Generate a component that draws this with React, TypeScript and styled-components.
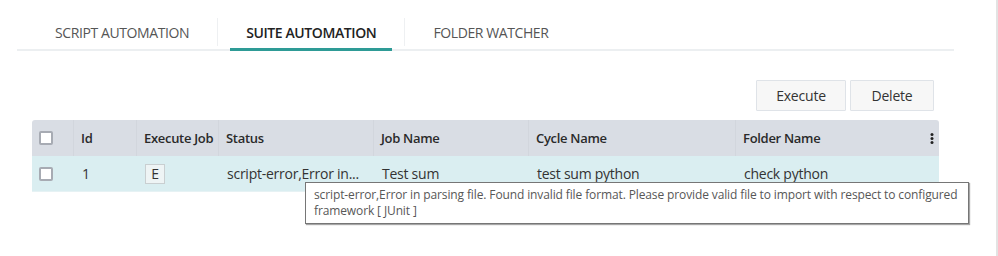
import React from "react";
import styled, { createGlobalStyle } from "styled-components";

const GlobalStyle = createGlobalStyle`
  html, body { margin: 0; padding: 0; background: #ffffff; }
  body { font-family: "Open Sans", "Noto Sans", sans-serif; color: #333; }
  * { box-sizing: border-box; }
`;

const Page = styled.div`
  width: 998px;
  height: 256px;
  border-right: 2px solid #e3e3e3;
  padding: 18px 0 0 17px;
  position: relative;
  overflow: hidden;
`;

const TabBar = styled.div`
  display: flex;
  align-items: stretch;
  width: 937px;
  height: 33px;
  border-bottom: 2px solid #eceff1;
  padding-left: 10px;
`;

const Tab = styled.div<{ $active?: boolean }>`
  display: flex;
  align-items: center;
  margin: 0 12px -2px;
  padding: 0 16px 2px;
  font-size: 14px;
  letter-spacing: -0.4px;
  color: ${(p) => (p.$active ? "#222" : "#555")};
  font-weight: ${(p) => (p.$active ? 600 : 400)};
  border-bottom: 3px solid ${(p) => (p.$active ? "#2e9b96" : "transparent")};
  white-space: nowrap;
`;

const TabDivider = styled.div`
  width: 1px;
  height: 28px;
  background: #eef0f2;
`;

const Toolbar = styled.div`
  display: flex;
  justify-content: flex-end;
  gap: 4px;
  width: 917px;
  margin-top: 29px;
`;

const Button = styled.button<{ $wide?: boolean }>`
  width: ${(p) => (p.$wide ? "90px" : "84px")};
  height: 31px;
  background: #f7f7f7;
  border: 1px solid #dfe3e8;
  border-radius: 1px;
  font-family: "Open Sans", sans-serif;
  font-size: 14px;
  letter-spacing: -0.2px;
  color: #333;
  padding: 0;
`;

const Table = styled.div`
  margin: 9px 0 0 15px;
  width: 907px;
`;

const HeaderRow = styled.div`
  display: grid;
  grid-template-columns: 42px 63px 82px 155px 155px 207px 203px;
  height: 36px;
  background: #d9dde4;
  border-radius: 3px 3px 0 0;
`;

const BodyRow = styled.div`
  display: grid;
  grid-template-columns: 42px 63px 82px 155px 155px 207px 203px;
  height: 36px;
  background: #daeef1;
  border-bottom: 1px solid #e6f2f4;
`;

const HeadCell = styled.div<{ $last?: boolean }>`
  display: flex;
  align-items: center;
  justify-content: space-between;
  padding: 0 ${(p) => (p.$last ? "5px" : "6px")} 0 7px;
  font-size: 13px;
  letter-spacing: -0.3px;
  font-weight: 600;
  color: #2a2a2a;
  border-right: ${(p) => (p.$last ? "none" : "1px solid #d2d6dd")};
  white-space: nowrap;
`;

const Cell = styled.div<{ $narrow?: boolean }>`
  display: flex;
  align-items: center;
  padding: 0 7px 0 ${(p) => (p.$narrow ? "7px" : "8px")};
  font-size: 14px;
  letter-spacing: -0.25px;
  color: #333;
  white-space: nowrap;
  overflow: hidden;
`;

const Checkbox = styled.span`
  display: inline-block;
  width: 14px;
  height: 14px;
  background: #fff;
  border: 2px solid #a7abb3;
  border-radius: 2px;
`;

const ExecBox = styled.span`
  display: inline-flex;
  align-items: center;
  justify-content: center;
  width: 20px;
  height: 20px;
  background: #eef4f5;
  border: 1px solid #c9cfd1;
  font-size: 14px;
  color: #333;
`;

const Kebab = styled.svg`
  width: 4px;
  height: 11px;
`;

const Tooltip = styled.div`
  position: absolute;
  left: 305px;
  top: 182px;
  width: 664px;
  height: 42px;
  background: #fff;
  border: 1px solid #767676;
  box-shadow: 1px 1px 1px rgba(0, 0, 0, 0.35);
  padding: 4px 8px;
  font-family: "Open Sans", sans-serif;
  font-size: 12px;
  line-height: 16px;
  letter-spacing: -0.12px;
  color: #575757;
`;

const columns = ["Id", "Execute Job", "Status", "Job Name", "Cycle Name", "Folder Name"];

export default function App() {
  return (
    <>
      <GlobalStyle />
      <Page>
        <TabBar>
          <Tab>SCRIPT AUTOMATION</Tab>
          <TabDivider />
          <Tab $active>SUITE AUTOMATION</Tab>
          <TabDivider />
          <Tab>FOLDER WATCHER</Tab>
        </TabBar>
        <Toolbar>
          <Button $wide>Execute</Button>
          <Button>Delete</Button>
        </Toolbar>
        <Table>
          <HeaderRow>
            <HeadCell>
              <Checkbox />
            </HeadCell>
            {columns.map((c, i) => (
              <HeadCell key={c} $last={i === columns.length - 1}>
                {c}
                {i === columns.length - 1 && (
                  <Kebab viewBox="0 0 4 11">
                    <circle cx="2" cy="1.5" r="1.5" fill="#222" />
                    <circle cx="2" cy="5.5" r="1.5" fill="#222" />
                    <circle cx="2" cy="9.5" r="1.5" fill="#222" />
                  </Kebab>
                )}
              </HeadCell>
            ))}
          </HeaderRow>
          <BodyRow>
            <Cell $narrow>
              <Checkbox />
            </Cell>
            <Cell>1</Cell>
            <Cell>
              <ExecBox>E</ExecBox>
            </Cell>
            <Cell>script-error,Error in...</Cell>
            <Cell>Test sum</Cell>
            <Cell>test sum python</Cell>
            <Cell>check python</Cell>
          </BodyRow>
        </Table>
        <Tooltip>
          script-error,Error in parsing file. Found invalid file format. Please provide valid file to import with
          respect to configured framework [ JUnit ]
        </Tooltip>
      </Page>
    </>
  );
}
